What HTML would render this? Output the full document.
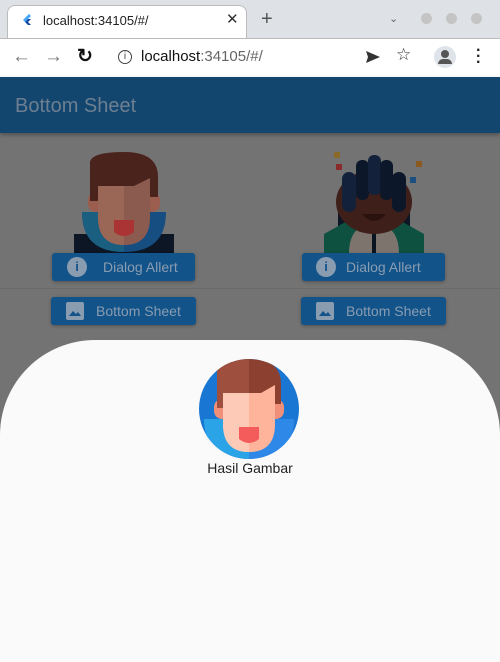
<!DOCTYPE html><html><head><style>
*{margin:0;padding:0;box-sizing:border-box}
body{width:500px;height:662px;overflow:hidden;font-family:"Liberation Sans",sans-serif;background:#737373;position:relative}
.abs{position:absolute}
.btn{position:absolute;background:#12538a;border-radius:3px;color:#8a9cb0;font-size:14px;height:28px;display:flex;align-items:center;box-shadow:0 1px 3px rgba(0,0,0,.3)}
</style></head><body>
<div class="abs" style="left:0;top:0;width:500px;height:38px;background:#dee1e6"></div>
<div class="abs" style="left:7px;top:5px;width:240px;height:34px;background:#fff;border-radius:8px 8px 0 0;border:1px solid #bbb;border-bottom:none"></div>
<svg class="abs" style="left:20px;top:13px" width="14" height="14" viewBox="0 0 14 14"><path d="M9 1L3 7l2 2 6-6z" fill="#42a5f5"/><path d="M5 9l3 3h3L8 9l3-3H8z" fill="#0d47a1"/></svg>
<div class="abs" style="left:43px;top:13px;font-size:13px;color:#222">localhost:34105/#/</div>
<div class="abs" style="left:226px;top:10px;font-size:15px;color:#333">✕</div>
<div class="abs" style="left:261px;top:8px;font-size:20px;color:#555">+</div>
<div class="abs" style="left:389px;top:12px;font-size:11px;color:#666">⌄</div>
<div class="abs" style="left:421px;top:13px;width:11px;height:11px;border-radius:50%;background:#c4c4c4"></div>
<div class="abs" style="left:446px;top:13px;width:11px;height:11px;border-radius:50%;background:#c4c4c4"></div>
<div class="abs" style="left:471px;top:13px;width:11px;height:11px;border-radius:50%;background:#c4c4c4"></div>
<div class="abs" style="left:0;top:38px;width:500px;height:39px;background:#fff;border-top:1px solid #bbb"></div>
<div class="abs" style="left:12px;top:46px;font-size:19px;color:#777">←</div>
<div class="abs" style="left:44px;top:46px;font-size:19px;color:#777">→</div>
<div class="abs" style="left:77px;top:45px;font-size:19px;color:#111;font-weight:bold">↻</div>
<div class="abs" style="left:118px;top:50px;width:14px;height:14px;border:1.5px solid #444;border-radius:50%;font-size:10px;text-align:center;line-height:11px;color:#444">i</div>
<div class="abs" style="left:141px;top:48px;font-size:15px;color:#111">localhost<span style="color:#666">:34105/#/</span></div>
<svg class="abs" style="left:365px;top:50px" width="16" height="14"><path d="M1 1l14 6-14 6 2-6z" fill="#333"/></svg>
<div class="abs" style="left:396px;top:45px;font-size:17px;color:#333">☆</div>
<div class="abs" style="left:434px;top:46px;width:22px;height:22px;border-radius:50%;background:#dfe3ea"></div>
<div class="abs" style="left:441px;top:50px;width:8px;height:8px;border-radius:50%;background:#555"></div>
<div class="abs" style="left:438px;top:59px;width:14px;height:5px;border-radius:5px 5px 0 0;background:#555"></div>
<div class="abs" style="left:476px;top:48px;font-size:16px;color:#222;line-height:6px;font-weight:bold">·<br>·<br>·</div>
<div class="abs" style="left:0;top:77px;width:500px;height:56px;background:#12466f;box-shadow:0 2px 4px rgba(0,0,0,.3)"></div>
<div class="abs" style="left:15px;top:95px;font-size:20px;color:#6d7f90">Bottom Sheet</div>
<svg class="abs" style="left:74px;top:152px" width="100" height="102" viewBox="0 0 100 102">
<rect x="0" y="82" width="100" height="20" fill="#0c1624"/>
<path d="M8 60q0 40 42 40q42 0 42-40z" fill="#174e82"/><path d="M8 60q0 40 42 40V60z" fill="#1a5e80"/>
<rect x="14" y="40" width="72" height="20" rx="8" fill="#9b5d4d"/>
<path d="M24 20h52v45q0 28-26 28t-26-28z" fill="#8a5b4e"/><path d="M24 20h26v73q-26 0-26-28z" fill="#9a6656"/>
<path d="M16 10q2-10 34-10q34 0 34 25v20h-8V26l-16 8H24v15h-8z" fill="#4a231c"/>
<path d="M40 68h20v12q-10 8-20 0z" fill="#a33"/>
</svg>
<svg class="abs" style="left:324px;top:152px" width="100" height="102" viewBox="0 0 100 102">
<rect x="12" y="12" width="6" height="6" fill="#8a2b2b"/><rect x="10" y="0" width="6" height="6" fill="#8a6a2a"/><rect x="92" y="9" width="6" height="6" fill="#8a5a20"/><rect x="86" y="25" width="6" height="6" fill="#1c4f80"/>
<rect x="14" y="55" width="72" height="47" fill="#0c1624"/>
<path d="M0 82l25-14h50l25 14v20H0z" fill="#0e5140"/>
<path d="M25 102q0-30 25-30t25 30z" fill="#7e746e"/><rect x="48" y="75" width="4" height="27" fill="#0a1420"/>
<ellipse cx="50" cy="50" rx="38" ry="32" fill="#3f1f19"/>
<rect x="18" y="20" width="14" height="40" rx="7" fill="#13223a"/><rect x="32" y="8" width="13" height="40" rx="6" fill="#0c182a"/><rect x="44" y="3" width="13" height="40" rx="6" fill="#13223a"/><rect x="56" y="8" width="13" height="40" rx="6" fill="#0c182a"/><rect x="68" y="20" width="14" height="40" rx="7" fill="#0c182a"/>
<path d="M38 62q12 14 24 0z" fill="#2a120e"/>
</svg>
<div class="btn" style="left:52px;top:253px;width:143px"><div style="margin-left:15px;width:20px;height:20px;border-radius:50%;background:#8a9cb0;color:#12538a;font-weight:bold;font-size:13px;text-align:center;line-height:20px">i</div><span style="margin-left:16px">Dialog Allert</span></div>
<div class="btn" style="left:302px;top:253px;width:143px"><div style="margin-left:14px;width:20px;height:20px;border-radius:50%;background:#8a9cb0;color:#12538a;font-weight:bold;font-size:13px;text-align:center;line-height:20px">i</div><span style="margin-left:10px">Dialog Allert</span></div>
<div class="abs" style="left:0;top:288px;width:500px;height:1px;background:#6a6a6a"></div>
<div class="btn" style="left:51px;top:297px;width:145px"><svg style="margin-left:15px" width="18" height="18"><rect width="18" height="18" rx="2" fill="#8a9cb0"/><path d="M3 14l4-5 3 3 2-2 3 4z" fill="#12538a"/></svg><span style="margin-left:12px">Bottom Sheet</span></div>
<div class="btn" style="left:301px;top:297px;width:145px"><svg style="margin-left:15px" width="18" height="18"><rect width="18" height="18" rx="2" fill="#8a9cb0"/><path d="M3 14l4-5 3 3 2-2 3 4z" fill="#12538a"/></svg><span style="margin-left:12px">Bottom Sheet</span></div>
<div class="abs" style="left:0;top:340px;width:500px;height:322px;background:#fafafa;border-radius:95px 95px 0 0"></div>
<svg class="abs" style="left:199px;top:359px" width="100" height="100" viewBox="0 0 100 100">
<defs><clipPath id="c"><circle cx="50" cy="50" r="50"/></clipPath></defs>
<circle cx="50" cy="50" r="50" fill="#1976d2"/>
<g clip-path="url(#c)">
<path d="M5 60q0 40 45 40q45 0 45-40z" fill="#2e88e8"/><path d="M5 60q0 40 45 40V60z" fill="#2aa4e6"/>
<rect x="15" y="40" width="70" height="20" rx="8" fill="#f0907a"/>
<path d="M24 20h52v45q0 28-26 28t-26-28z" fill="#fdb49a"/><path d="M24 20h26v73q-26 0-26-28z" fill="#fdcab8"/>
<path d="M18 12q4-12 32-12q32 0 32 25v20h-6V26l-14 8H24v15h-6z" fill="#8b4030"/><path d="M18 12q4-12 32-12v34H24v15h-6z" fill="#9f4f3e"/>
<path d="M40 68h20v12q-10 8-20 0z" fill="#f45c5c"/>
</g></svg>
<div class="abs" style="left:0;top:460px;width:500px;text-align:center;font-size:14px;color:#222;padding-left:0">Hasil Gambar</div>
</body></html>
